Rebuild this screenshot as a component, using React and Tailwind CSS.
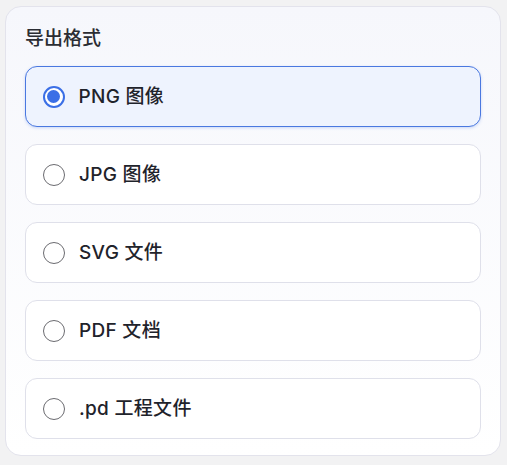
import { useState } from 'react'

const options = [
  { id: 'png', label: 'PNG 图像' },
  { id: 'jpg', label: 'JPG 图像' },
  { id: 'svg', label: 'SVG 文件' },
  { id: 'pdf', label: 'PDF 文档' },
  { id: 'pd', label: '.pd 工程文件' },
]

export default function App() {
  const [value, setValue] = useState('png')

  return (
    <div
      className="min-h-[465px] bg-[#f2f2f3] pt-[6px] pl-[5px] pr-[6px]"
      style={{ fontFamily: 'Inter, "Noto Sans CJK SC", sans-serif' }}
    >
      <div className="rounded-[16px] border border-[#e3e3ec] bg-gradient-to-b from-[#f6f7fc] to-white px-[19px] pt-[18px] pb-[16px]">
        <h2 className="mb-[13px] text-[19px] font-medium leading-[28px] text-[#2b2d33]">导出格式</h2>
        <div className="flex flex-col gap-[17px]">
          {options.map(o => {
            const active = value === o.id
            return (
              <button
                key={o.id}
                onClick={() => setValue(o.id)}
                className={
                  active
                    ? 'flex h-[61px] items-center gap-[14px] rounded-[12px] border-[1.5px] border-[#4a78e0] bg-[#eef3fe] pl-[16.5px] text-left shadow-[0_1px_3px_rgba(59,111,230,0.25)]'
                    : 'flex h-[61px] items-center gap-[14px] rounded-[12px] border border-[#dfe0ea] bg-white pl-[17px] text-left'
                }
              >
                {active ? (
                  <span className="flex h-[22px] w-[22px] items-center justify-center rounded-full border-2 border-[#3b6fe6] bg-white">
                    <span className="h-[13px] w-[13px] rounded-full bg-[#3b6fe6]" />
                  </span>
                ) : (
                  <span className="h-[22px] w-[22px] rounded-full border-[1.5px] border-[#6b6b70] bg-white" />
                )}
                <span className="pt-[1px] text-[19px] font-medium tracking-[0.3px] text-[#1f232b]">{o.label}</span>
              </button>
            )
          })}
        </div>
      </div>
    </div>
  )
}
